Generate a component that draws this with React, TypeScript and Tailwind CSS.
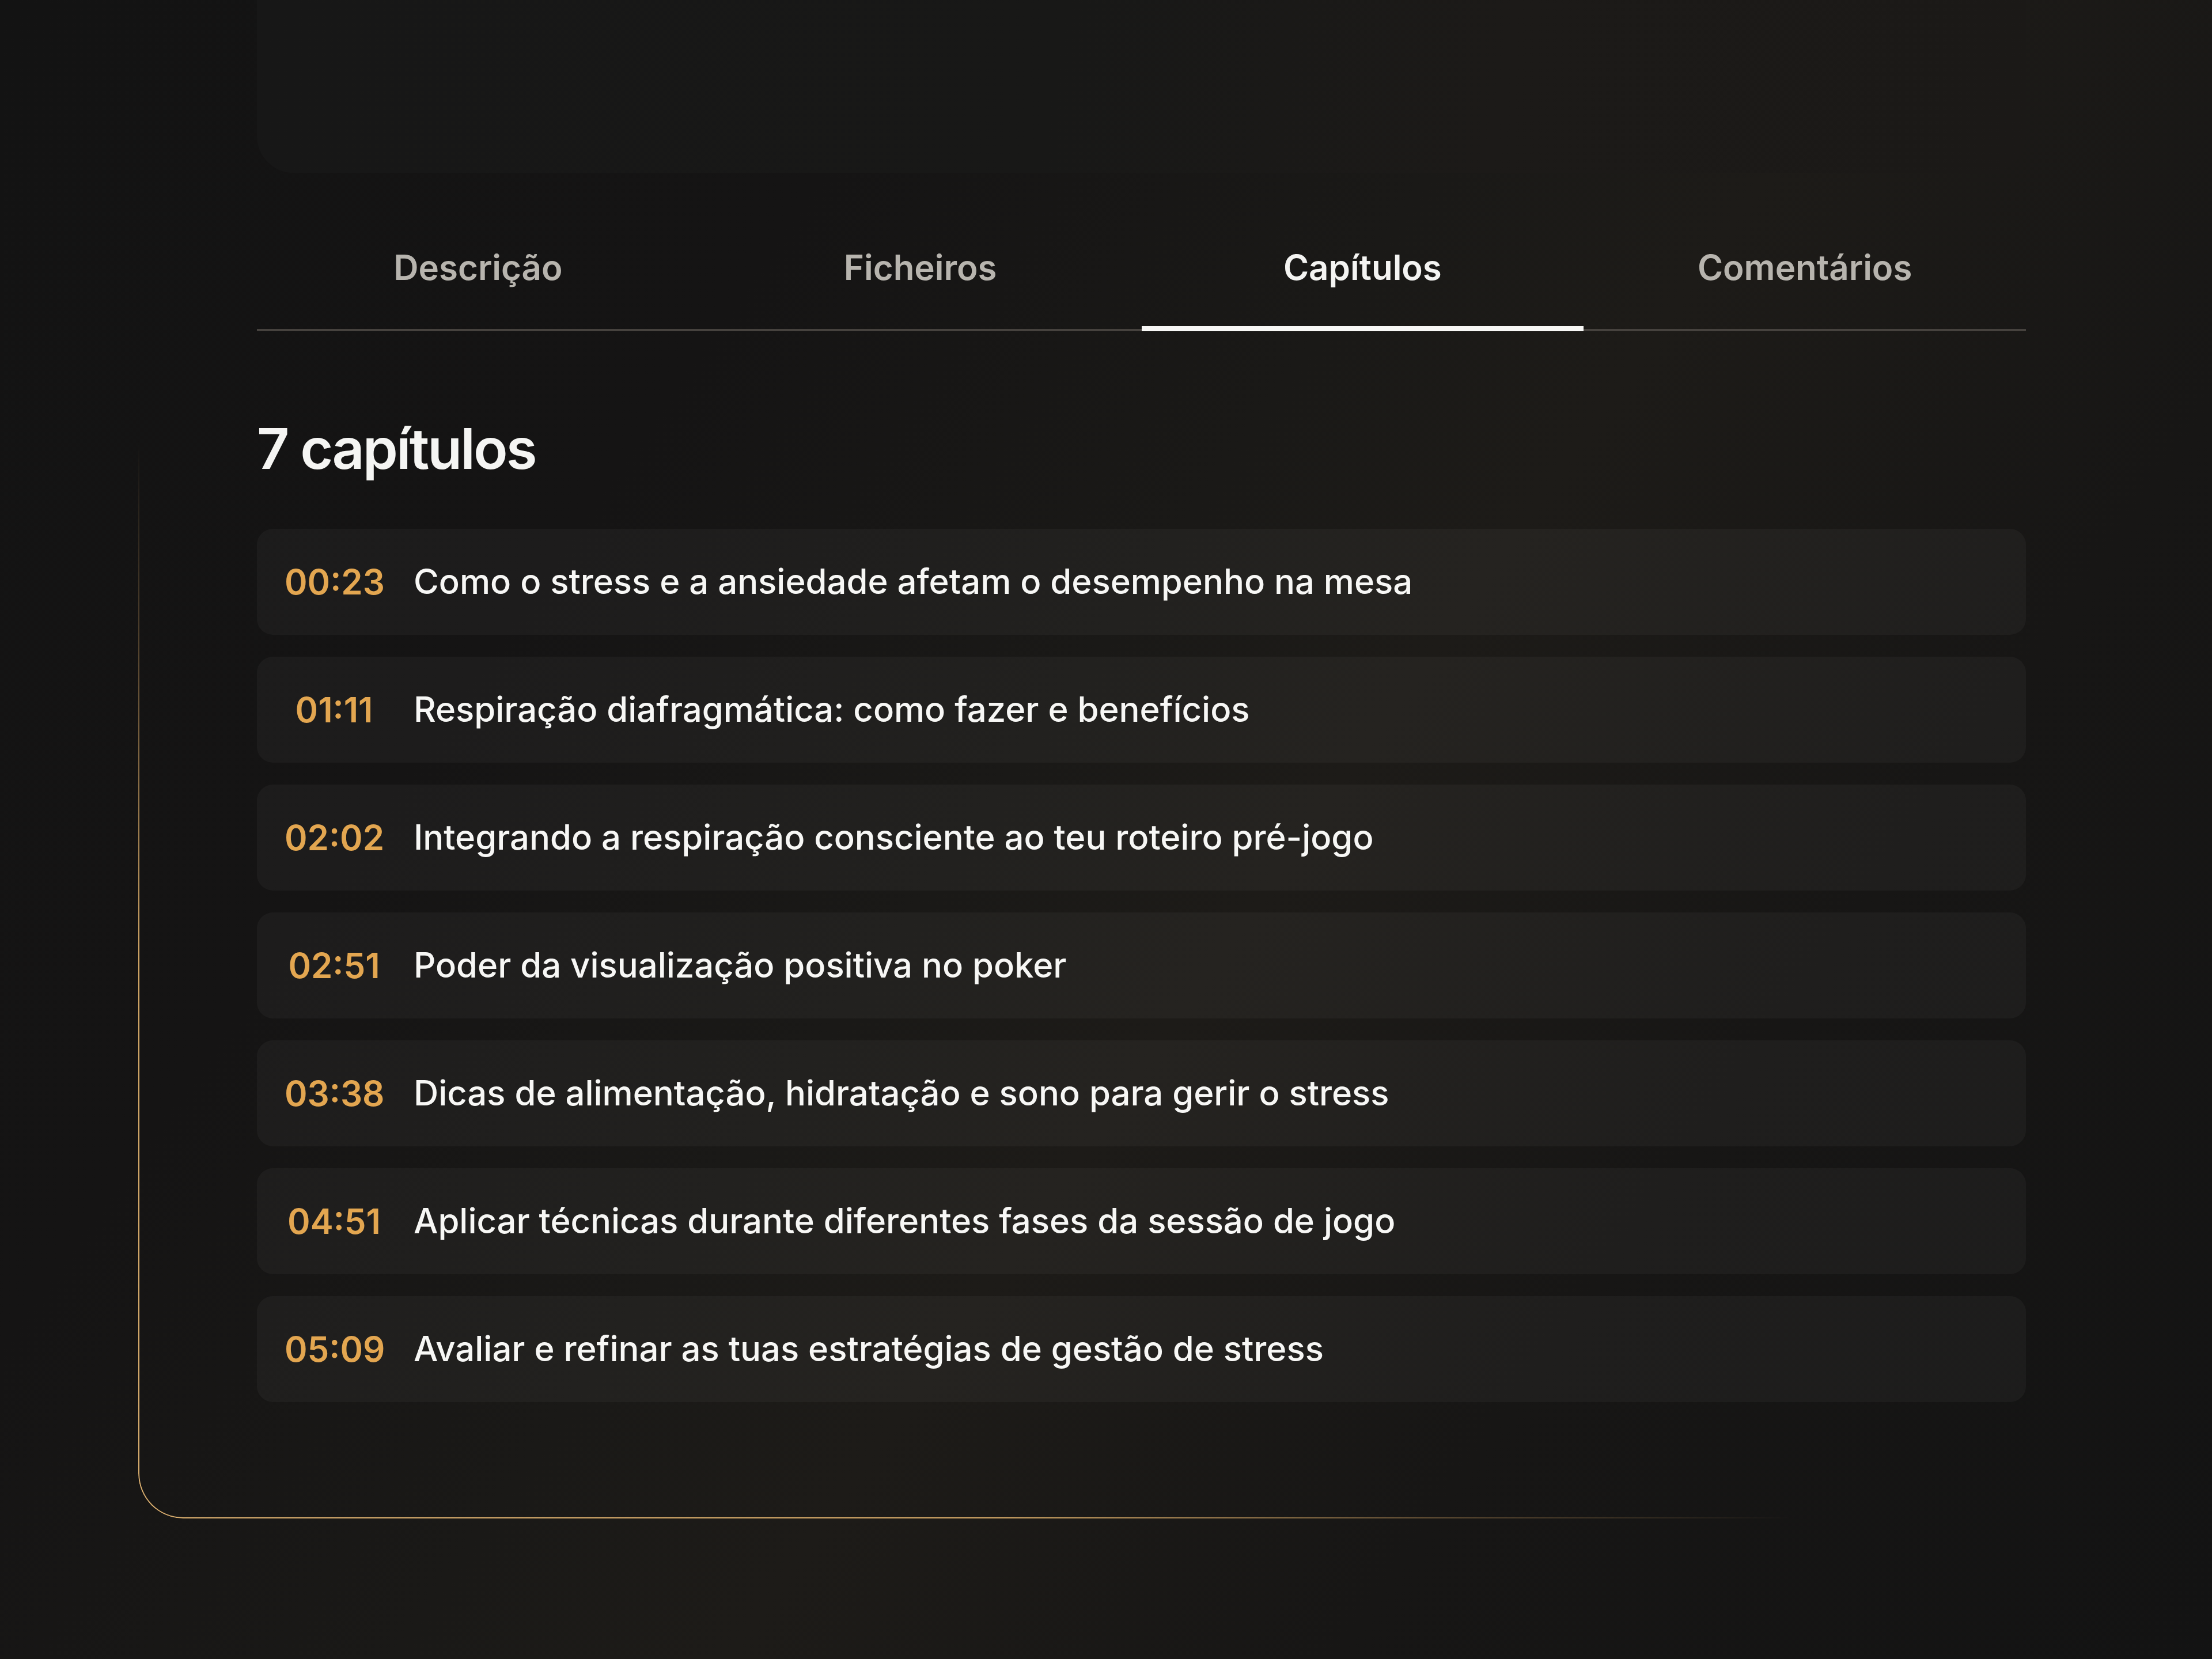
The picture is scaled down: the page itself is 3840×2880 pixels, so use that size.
import React from "react";

const tabs = ["Descrição", "Ficheiros", "Capítulos", "Comentários"];

const chapters = [
  { time: "00:23", title: "Como o stress e a ansiedade afetam o desempenho na mesa" },
  { time: "01:11", title: "Respiração diafragmática: como fazer e benefícios" },
  { time: "02:02", title: "Integrando a respiração consciente ao teu roteiro pré-jogo" },
  { time: "02:51", title: "Poder da visualização positiva no poker" },
  { time: "03:38", title: "Dicas de alimentação, hidratação e sono para gerir o stress" },
  { time: "04:51", title: "Aplicar técnicas durante diferentes fases da sessão de jogo" },
  { time: "05:09", title: "Avaliar e refinar as tuas estratégias de gestão de stress" },
];

const ChapterRow: React.FC<{ time: string; title: string }> = ({ time, title }) => (
  <li className="flex h-[184px] items-center gap-[52px] rounded-[28px] bg-white/[0.035] px-12">
    <span className="w-[172px] shrink-0 text-center text-[60px] font-semibold text-[#e3a650]">
      {time}
    </span>
    <span className="text-[59.8px] font-medium text-[#f7f7f5]">{title}</span>
  </li>
);

export default function App() {
  return (
    <div
      className="h-[2880px] w-full overflow-hidden bg-[linear-gradient(125deg,#131313_0%,#151414_28%,#1a1917_46%,#1d1b18_56%,#171615_74%,#131313_100%)] pl-[240px] pr-[117px]"
      style={{ fontFamily: "Inter, 'Noto Sans', sans-serif" }}
    >
      {/* framed panel, gold edge shows on left + bottom only */}
      <div className="relative isolate pb-[202px] pl-[206px] pr-[206px] before:pointer-events-none before:absolute before:inset-0 before:-z-10 before:rounded-bl-[78px] before:border-b-2 before:border-l-2 before:border-transparent before:content-[''] before:[background:radial-gradient(3000px_1950px_at_0%_100%,#dcb070_0%,#d6aa68_50%,rgba(200,155,95,0.35)_78%,transparent_96%)_border-box] before:[mask-image:linear-gradient(#000,#000),linear-gradient(#000,#000)] before:[mask-clip:padding-box,border-box] before:[mask-composite:exclude]">
        {/* player / top card */}
        <div className="h-[300px] rounded-b-[64px] bg-[linear-gradient(100deg,#171717_0%,#181817_45%,#1c1a18_70%,#1b1917_100%)]" />

        {/* tabs */}
        <div className="mt-[128px] grid grid-cols-4 border-b-4 border-[#46423e]">
          {tabs.map((t) => {
            const active = t === "Capítulos";
            return (
              <button
                key={t}
                className={
                  "-mb-[4px] border-b-[9px] pb-[66px] text-center text-[60px] font-semibold leading-[72px] " +
                  (active ? "border-[#f7f7f5] text-[#f4f4f2]" : "border-transparent text-[#b7b4ae]")
                }
              >
                {t}
              </button>
            );
          })}
        </div>

        {/* chapters */}
        <h2 className="mt-[144px] text-[98px] font-semibold leading-[120px] tracking-[-0.03em] text-[#f5f5f3]">
          7 capítulos
        </h2>
        <ul className="mt-[79px] flex flex-col gap-[38px]">
          {chapters.map((c) => (
            <ChapterRow key={c.time} time={c.time} title={c.title} />
          ))}
        </ul>
      </div>
    </div>
  );
}
